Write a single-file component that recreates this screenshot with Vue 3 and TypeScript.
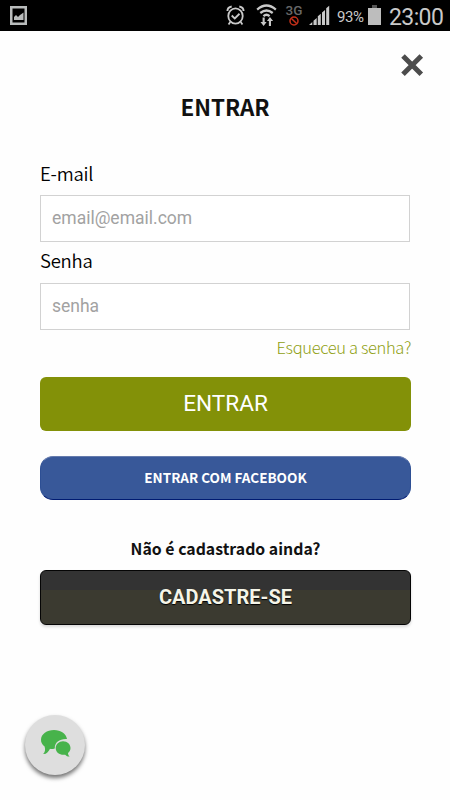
<script setup lang="ts">
import { ref } from 'vue'

const email = ref('')
const password = ref('')
</script>

<template>
  <div class="screen">
    <header class="status">
      <svg class="picture" width="18" height="20" viewBox="0 0 18 20">
        <path fill="#b9bcbc" fill-rule="evenodd" d="M0 0h17v19H0zM2.500 2.500v14h12v-14z" />
        <path fill="#b9bcbc" d="M4 14v-3l2-2 2 2 2-2 1.500-1 2-1.500V14z" />
      </svg>
      <div class="indicators">
        <svg class="alarm" width="19" height="21" viewBox="0 0 20 21" preserveAspectRatio="none" fill="none" stroke="#c9c9c9">
          <circle cx="10" cy="11" r="7.600" stroke-width="1.900" />
          <path stroke-width="1.900" d="M6 10.500l3.200 3 5-4.800M4.500 17l-1.800 2.500M15.500 17l1.800 2.500" />
          <path stroke-width="2" d="M1.500 6C1.500 3.500 3 2 6 1.500M18.500 6C18.500 3.500 17 2 14 1.500" />
        </svg>
        <svg class="wifi" width="21" height="23" viewBox="0 0 22 23" preserveAspectRatio="none" fill="none" stroke="#c9c9c9">
          <path stroke-width="2.400" d="M1.200 5.600Q11-2.600 20.800 5.600M4.500 9Q11 3.800 17.500 9M7.800 12.200Q11 9.500 14.200 12.200" />
          <path fill="#c9c9c9" stroke="none" d="M6.900 13.500h2.200V18h2L8 22l-3.300-4h2.200zM13.500 22h2.200v-5h2.200l-3.300-4-3.100 4h2z" />
        </svg>
        <div class="network">
          <span>3G</span>
          <svg width="10" height="10" viewBox="0 0 10 10" fill="none" stroke="#c5301a" stroke-width="1.500">
            <circle cx="5" cy="5" r="4" />
            <path d="M2.200 2.200l5.600 5.600" />
          </svg>
        </div>
        <svg class="signal" width="21" height="21" viewBox="0 0 21 21" fill="#c9c9c9">
          <path d="M0 20l3.300-2.900V20zM4.500 20v-4.300l3.200-2.700v7zM8.800 20v-8.700l3-2.500V20zM13 20V7.500l3-2.600V20zM17.200 20V3.300L20.200 .7V20z" />
        </svg>
        <span class="percent">93%</span>
        <svg class="battery" width="13" height="20" viewBox="0 0 13 20">
          <path fill="#555" d="M4 0h5v3H4z" />
          <path fill="#bdbdbd" d="M0 3h13v17H0z" />
        </svg>
        <span class="clock">23:00</span>
      </div>
    </header>

    <main class="content">
      <button class="close" type="button" aria-label="Fechar">
        <svg width="24" height="24" viewBox="0 0 24 24">
          <path d="M3 3l18.300 18.300M21.300 3l-18.300 18.300" stroke="#4c4c4c" stroke-width="5" />
        </svg>
      </button>
      <h1>ENTRAR</h1>
      <form class="form" @submit.prevent>
        <label for="email">E-mail</label>
        <input id="email" v-model="email" type="email" placeholder="email@email.com" />
        <label class="second" for="senha">Senha</label>
        <input id="senha" v-model="password" type="password" placeholder="senha" />
        <a class="forgot">Esqueceu a senha?</a>
        <button class="enter" type="submit">ENTRAR</button>
        <button class="facebook" type="button">ENTRAR COM FACEBOOK</button>
        <p class="question">Não é cadastrado ainda?</p>
        <button class="register" type="button">CADASTRE-SE</button>
      </form>
    </main>

    <button class="chat" type="button" aria-label="Chat">
      <svg width="30" height="27" viewBox="0 0 30 27" fill="#47b34b">
        <path d="M13 0C20 0 25 3.600 26 9C19 8.500 13.500 12 13.800 18.400C11.800 19 9.800 19 9 18.700C7.500 22 5 24.500 2.200 24C4 22 4.600 19.500 3.600 16.500C1 14.500 0 12.500 0 9.800C0 4 6 0 13 0z" />
        <path d="M22 11.200C26.500 11.200 29.500 14.300 29.500 18C29.500 20.200 28.600 21.600 27 23C27 24.600 27.600 25.700 28.800 26.600C26.800 26.700 25.300 26 24.200 24.700C19 25.500 14.700 22.300 14.700 18.200C14.700 14.300 18 11.200 22 11.200z" />
      </svg>
    </button>
  </div>
</template>

<style>
body {
  margin: 0;
  background: #fff;
}
</style>

<style scoped>
.screen {
  position: relative;
  width: 450px;
  height: 800px;
  overflow: hidden;
  background: #fefefe;
  color: #111;
  font-family: "Noto Sans CJK SC", sans-serif;
}
button {
  display: block;
  box-sizing: border-box;
  padding: 0;
  border: 0;
  font: inherit;
}
svg {
  display: block;
  flex: none;
}
.status {
  display: flex;
  justify-content: space-between;
  height: 31px;
  background: #000;
  color: #c9c9c9;
  font-family: Roboto, sans-serif;
}
.picture {
  margin: 6px 0 0 10px;
}
.indicators {
  display: flex;
  align-items: flex-start;
  padding-right: 6px;
}
.alarm {
  margin: 5px 11px 0 0;
}
.wifi {
  margin: 4px 8px 0 0;
}
.network {
  display: flex;
  flex-direction: column;
  align-items: center;
  width: 18px;
  margin: 5px 6px 0 0;
  color: #686868;
  font-size: 13.5px;
  font-weight: 500;
  line-height: 11px;
}
.signal {
  margin: 5px 7px 0 0;
}
.percent {
  width: 28px;
  margin-right: 3px;
  font-size: 15px;
  line-height: 34px;
  letter-spacing: -0.4px;
}
.battery {
  margin: 5px 8px 0 0;
}
.clock {
  width: 55px;
  font-size: 23px;
  line-height: 35px;
  letter-spacing: -0.6px;
}
.content {
  display: flex;
  flex-direction: column;
  padding: 22px 39px 0 40px;
}
.close {
  align-self: flex-end;
  margin-right: -13px;
  background: none;
}
h1 {
  height: 30px;
  margin: 14px 0 0;
  padding-right: 1px;
  text-align: center;
  font-size: 22.4px;
  font-weight: 700;
  line-height: 30px;
}
.form {
  display: flex;
  flex-direction: column;
}
label {
  height: 32px;
  margin-top: 42px;
  color: #000;
  font-size: 18.5px;
  font-weight: 350;
  line-height: 21px;
  letter-spacing: -0.25px;
}
label.second {
  height: 32.500px;
  margin-top: 8px;
  line-height: 20px;
}
input {
  box-sizing: border-box;
  width: 370px;
  height: 47px;
  padding: 0 11px 1px;
  border: 1px solid #d2d2d2;
  border-radius: 0;
  background: #fff;
  font-family: Roboto, sans-serif;
  font-size: 17.5px;
  outline: none;
}
input::placeholder {
  color: #a2a2a2;
  opacity: 1;
}
.forgot {
  align-self: flex-end;
  height: 47.700px;
  color: #8fa012;
  font-size: 16.5px;
  font-weight: 300;
  line-height: 35px;
  letter-spacing: -0.35px;
}
.enter {
  height: 54px;
  padding-bottom: 1px;
  border-radius: 6px;
  background: #839108;
  color: #fff;
  font-family: Roboto, sans-serif;
  font-size: 22.6px;
}
.facebook {
  height: 44px;
  margin-top: 25px;
  padding-bottom: 2px;
  border: 1px solid #2d4f94;
  border-top-color: #657bad;
  border-bottom-color: #001b72;
  border-radius: 13px;
  background: #385899;
  color: #fff;
  font-size: 13.5px;
  font-weight: 700;
}
.question {
  height: 26px;
  margin: 36px 0 8px;
  text-align: center;
  font-size: 15.85px;
  font-weight: 700;
  line-height: 26px;
}
.register {
  height: 55px;
  padding-bottom: 1px;
  border: 1px solid #050505;
  border-radius: 6px;
  background: linear-gradient(#333 19px, #3b3a30 19px);
  box-shadow: 0 2px 3px rgba(0, 0, 0, 0.15);
  color: #f5f5e8;
  font-family: Roboto, sans-serif;
  font-size: 20px;
  font-weight: 700;
  text-shadow: 0 1px 1px #000;
}
.chat {
  position: absolute;
  left: 25px;
  top: 715px;
  display: flex;
  width: 60px;
  height: 60px;
  padding: 15px 0 0 16px;
  border-radius: 50%;
  background: #dedede;
  box-shadow: 0 3px 4px rgba(0, 0, 0, 0.55);
}
</style>
